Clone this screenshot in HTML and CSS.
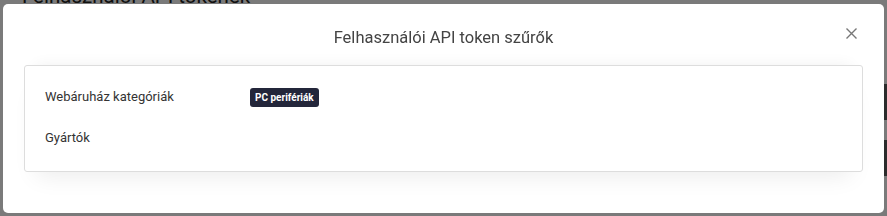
FILE: index.html
```html
<!DOCTYPE html>
<html lang="hu">
<head>
    <meta charset="UTF-8">
    <meta name="viewport" content="width=device-width, initial-scale=1.0">
    <title>Felhasználói API tokenek</title>
    <link rel="stylesheet" href="styles.css">
</head>
<body>

    <!-- Oldal a modal mögött -->
    <div class="page">
        <h1 class="page-title">Felhasználói API tokenek</h1>
        <div class="side-rows">
            <div class="side-row"></div>
            <div class="side-row"></div>
        </div>
        <div class="bottom-bar"></div>
    </div>

    <!-- Modal -->
    <div class="backdrop">
        <div class="modal">
            <div class="modal-header">
                <div class="modal-title">Felhasználói API token szűrők</div>
                <button class="modal-close" aria-label="Bezárás">
                    <svg width="11" height="11" viewBox="0 0 11 11">
                        <path d="M0.5 0.5 L10.5 10.5 M10.5 0.5 L0.5 10.5" stroke="#777" stroke-width="1.4" fill="none"/>
                    </svg>
                </button>
            </div>

            <div class="filter-card">
                <div class="filter-row">
                    <div class="filter-label">Webáruház kategóriák</div>
                    <div class="filter-value">
                        <span class="tag">PC perifériák</span>
                    </div>
                </div>
                <div class="filter-row">
                    <div class="filter-label">Gyártók</div>
                    <div class="filter-value"></div>
                </div>
            </div>
        </div>
    </div>

</body>
</html>
```

FILE: styles.css
```css
body {
    margin: 0;
    background: #fff;
    font-family: Roboto, "Noto Sans", sans-serif;
    overflow: hidden;
}

/* Oldal a háttérben */
.page {
    height: 216px;
    position: relative;
}

.page-title {
    margin: -15px 0 0 22px;
    font-size: 20.5px;
    line-height: 22px;
    font-weight: 400;
    color: #222;
}

.side-rows {
    position: absolute;
    right: 0;
    top: 99px;
    width: 10px;
}

.side-row {
    height: 36px;
    margin-bottom: 20px;
    background: #5c5c5c;
}

.bottom-bar {
    position: absolute;
    left: 291px;
    bottom: 0;
    width: 79px;
    height: 3px;
    background: #5c5c5c;
}

/* Sötét háttér a modal mögött */
.backdrop {
    position: fixed;
    top: 0;
    left: 0;
    right: 0;
    bottom: 0;
    background: rgba(0, 0, 0, 0.52);
    padding: 4px 3px 3px 3px;
}

.modal {
    background: #fff;
    border-radius: 5px;
    height: 209px;
    padding: 0 21px;
    box-sizing: border-box;
}

.modal-header {
    position: relative;
    padding: 22px 0 15px;
    text-align: center;
}

.modal-title {
    font-size: 16.5px;
    line-height: 24px;
    color: #444;
}

.modal-close {
    position: absolute;
    right: 6px;
    top: 23px;
    border: none;
    background: none;
    padding: 0;
    cursor: pointer;
}

/* Szűrők kártya */
.filter-card {
    border: 1px solid #ddd;
    border-radius: 3px;
    padding: 20px 20px 24px;
    box-shadow: 0 -12px 14px -12px rgba(0, 0, 0, 0.06), 0 16px 22px -12px rgba(0, 0, 0, 0.08);
    display: flex;
    flex-direction: column;
    gap: 21px;
}

.filter-row {
    display: flex;
    align-items: center;
    height: 20px;
}

.filter-label {
    width: 205px;
    font-size: 13px;
    color: #333;
}

.tag {
    display: inline-block;
    background: #23263a;
    color: #fff;
    font-size: 10px;
    font-weight: 700;
    line-height: 19px;
    padding: 0 5px;
    border-radius: 3px;
}
```
